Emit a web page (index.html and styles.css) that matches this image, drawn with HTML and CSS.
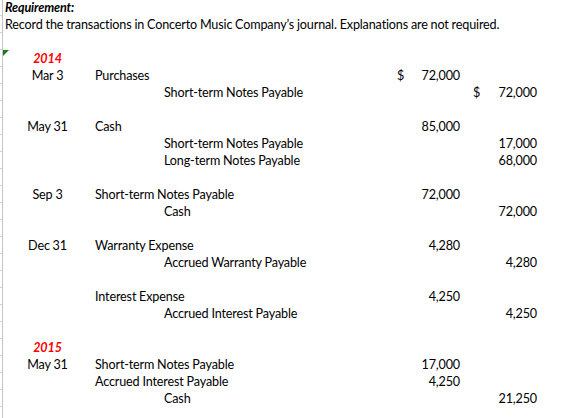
FILE: index.html
```html
<!DOCTYPE html>
<html>
<head>
<meta charset="utf-8">
<link rel="stylesheet" href="styles.css">
</head>
<body>
<div class="sheet">
  <div class="row"><span class="req">Requirement:</span></div>
  <div class="row"><span class="instr">Record the transactions in Concerto Music Company’s journal. Explanations are not required.</span></div>
  <div class="row"></div>
  <div class="row marked"><span class="date year">2014</span></div>
  <div class="row"><span class="date">Mar 3</span><span class="acct">Purchases</span><span class="dr"><span class="cur">$</span>72,000</span><span class="cr"></span></div>
  <div class="row"><span class="date"></span><span class="acct credit">Short-term Notes Payable</span><span class="dr"></span><span class="cr"><span class="cur">$</span>72,000</span></div>
  <div class="row"></div>
  <div class="row"><span class="date">May 31</span><span class="acct">Cash</span><span class="dr">85,000</span><span class="cr"></span></div>
  <div class="row"><span class="date"></span><span class="acct credit">Short-term Notes Payable</span><span class="dr"></span><span class="cr">17,000</span></div>
  <div class="row"><span class="date"></span><span class="acct credit">Long-term Notes Payable</span><span class="dr"></span><span class="cr">68,000</span></div>
  <div class="row"></div>
  <div class="row"><span class="date">Sep 3</span><span class="acct">Short-term Notes Payable</span><span class="dr">72,000</span><span class="cr"></span></div>
  <div class="row"><span class="date"></span><span class="acct credit">Cash</span><span class="dr"></span><span class="cr">72,000</span></div>
  <div class="row"></div>
  <div class="row"><span class="date">Dec 31</span><span class="acct">Warranty Expense</span><span class="dr">4,280</span><span class="cr"></span></div>
  <div class="row"><span class="date"></span><span class="acct credit">Accrued Warranty Payable</span><span class="dr"></span><span class="cr">4,280</span></div>
  <div class="row"></div>
  <div class="row"><span class="date"></span><span class="acct">Interest Expense</span><span class="dr">4,250</span><span class="cr"></span></div>
  <div class="row"><span class="date"></span><span class="acct credit">Accrued Interest Payable</span><span class="dr"></span><span class="cr">4,250</span></div>
  <div class="row"></div>
  <div class="row"><span class="date year">2015</span></div>
  <div class="row"><span class="date">May 31</span><span class="acct">Short-term Notes Payable</span><span class="dr">17,000</span><span class="cr"></span></div>
  <div class="row"><span class="date"></span><span class="acct">Accrued Interest Payable</span><span class="dr">4,250</span><span class="cr"></span></div>
  <div class="row"><span class="date"></span><span class="acct credit">Cash</span><span class="dr"></span><span class="cr">21,250</span></div>
  <div class="row"></div>
</div>
</body>
</html>
```

FILE: styles.css
```css
html, body {
  margin: 0;
  padding: 0;
  background: #ffffff;
}
body {
  width: 565px;
  height: 418px;
  overflow: hidden;
  font-family: "Lato", "Liberation Sans", sans-serif;
  font-size: 12.6px;
  letter-spacing: -0.15px;
  word-spacing: -0.2px;
  color: #000000;
}
.sheet {
  margin-top: -1px;
  margin-left: 2px;
  border-left: 1px solid #c6c6c6;
  position: relative;
  background: #fff;
}
.sheet::before {
  content: "";
  position: absolute;
  left: -3px;
  top: 0;
  bottom: 0;
  width: 2px;
  background: repeating-linear-gradient(to bottom, transparent 0, transparent 16px, #d4d4d4 16px, #d4d4d4 17px);
}
.row {
  height: 17px;
  line-height: 18px;
  display: grid;
  grid-template-columns: 89px 290px 85px 77px;
  white-space: nowrap;
  position: relative;
}
.req, .instr {
  grid-column: 1 / -1;
  padding-left: 2px;
}
.req {
  font-weight: bold;
  font-style: italic;
}
.marked::before {
  content: "";
  position: absolute;
  left: 0;
  top: 0;
  width: 0;
  height: 0;
  border-top: 6px solid #1e7a1e;
  border-right: 6px solid transparent;
}
.date {
  text-align: center;
}
.year {
  color: #ff0000;
  font-weight: bold;
  font-style: italic;
}
.acct {
  padding-left: 3px;
}
.acct.credit {
  padding-left: 72px;
}
.dr, .cr {
  display: flex;
  justify-content: flex-end;
  padding-right: 7px;
  position: relative;
}
.cur {
  margin-right: auto;
}
.dr .cur {
  padding-left: 15px;
}
.cr .cur {
  padding-left: 6px;
}
```
